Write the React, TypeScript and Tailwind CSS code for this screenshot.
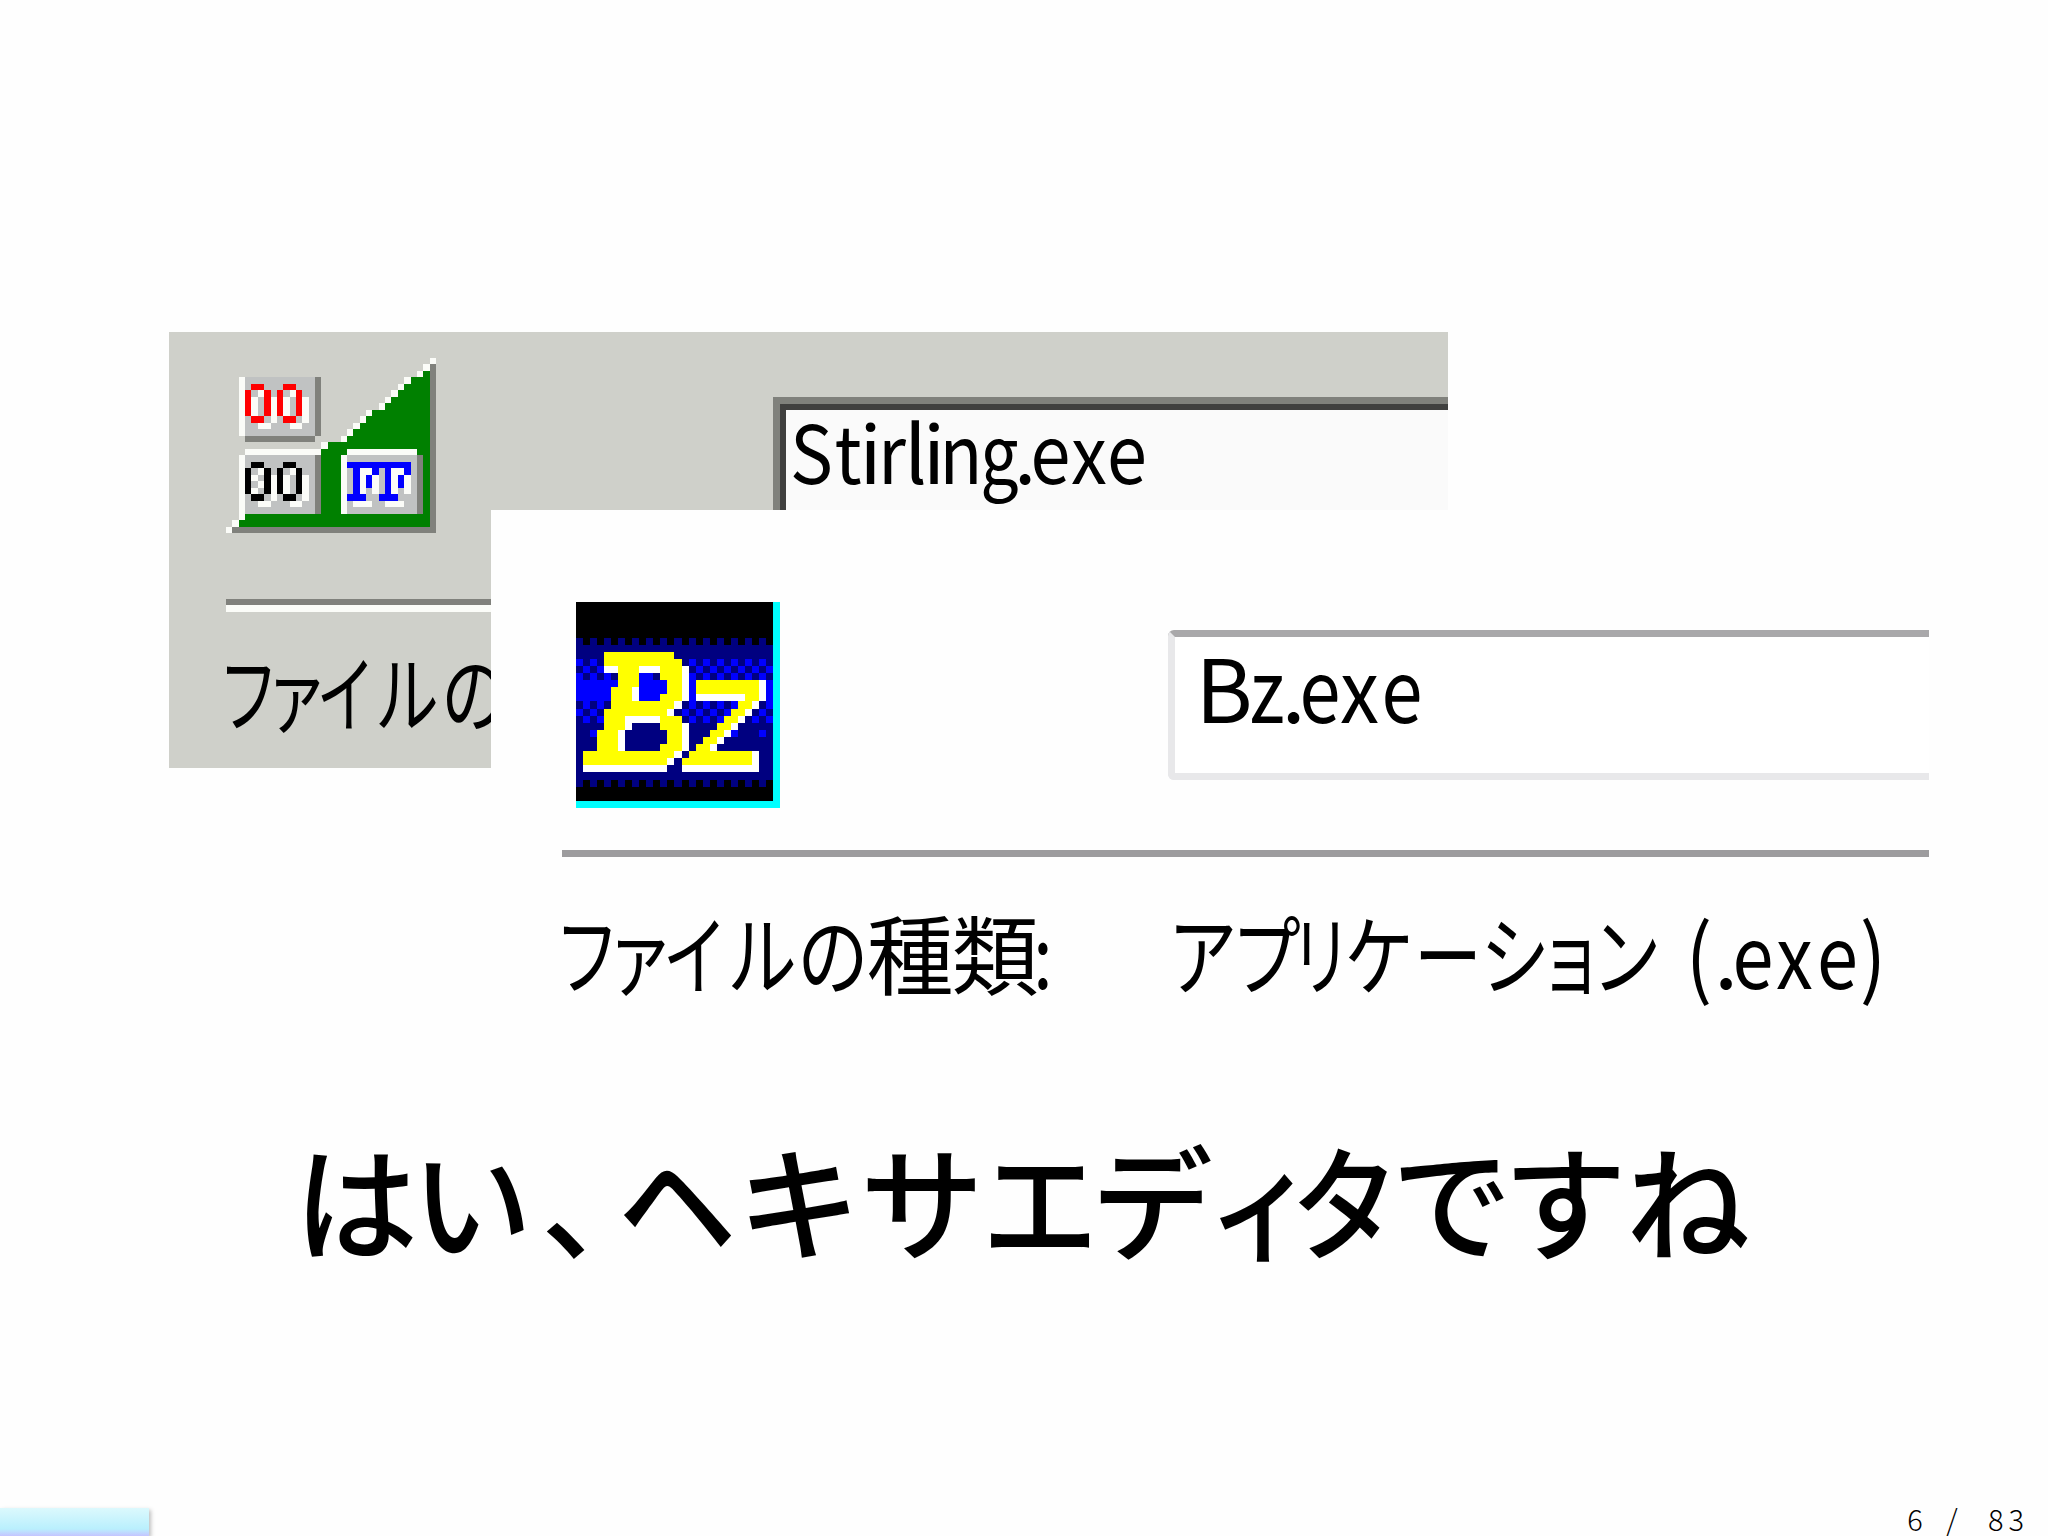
type Glyph = [char: string, width: number, scale?: number];
type Run = [x: number, y: number, w: number, h: number, fill: string];

const SLIDE_TITLE: Glyph[] = [
  ["は", 112], ["い", 120, 0.97], ["、", 80], ["ヘ", 130, 0.96], ["キ", 114], ["サ", 132], ["エ", 104, 0.94],
  ["デ", 120, 0.98], ["ィ", 98, 0.86], ["タ", 70, 0.88], ["で", 144, 0.97], ["す", 82], ["ね", 164],
];

const STIRLING_NAME: Glyph[] = [
  ["S", 45, 0.9], ["t", 28, 0.9], ["i", 17], ["r", 26, 0.9], ["l", 21], ["i", 16],
  ["n", 38, 0.88], ["g", 39, 0.85], [".", 12], ["e", 39, 0.9], ["x", 38, 0.9], ["e", 38, 0.9],
];

const STIRLING_TYPE: Glyph[] = [
  ["フ", 51, 0.72], ["ァ", 45, 0.75], ["イ", 54, 0.7], ["ル", 68, 0.76], ["の", 66, 0.78],
];

const BZ_NAME: Glyph[] = [["B", 50], ["z", 36, 0.85], [".", 17], ["e", 36, 0.85], ["x", 43, 0.9], ["e", 42, 0.85]];

const BZ_TYPE_LABEL: Glyph[] = [
  ["フ", 56, 0.75], ["ァ", 50, 0.78], ["イ", 60, 0.75], ["ル", 74, 0.8], ["の", 68, 0.82],
  ["種", 86], ["類", 84], [":", 12, 0.8],
];

const BZ_TYPE: Glyph[] = [
  ["ア", 63, 0.8], ["プ", 64, 0.8], ["リ", 46, 0.7], ["ケ", 70, 0.8], ["ー", 68, 0.78], ["シ", 66, 0.8],
  ["ョ", 46, 0.75], ["ン", 65, 0.8], [" ", 20], ["(", 40, 0.9], [".", 14], ["e", 40, 0.85], ["x", 43, 0.85],
  ["e", 43, 0.85], [")", 28, 0.9],
];

const W = "#fbfcf8";
const G = "#008000";
const L = "#c0c2c2";
const D = "#80817c";

// left edge of the white slope, top row first
const SLOPE = [32, 31, 30, 28, 27, 26, 25, 24, 22, 21, 20, 19, 18, 15];

function zero(x: number, y: number, fill: string): Run[] {
  return [
    [x + 2, y + 1, 1, 1, W], [x + 1, y + 2, 1, 3, W], [x + 4, y + 2, 1, 4, W], [x + 2, y + 6, 2, 1, W],
    [x + 1, y, 2, 1, fill], [x, y + 1, 1, 4, fill], [x + 3, y + 1, 1, 4, fill], [x + 1, y + 5, 2, 1, fill],
  ];
}

function letterF(x: number, y: number): Run[] {
  return [
    [x + 2, y + 1, 2, 1, W], [x + 2, y + 2, 1, 3, W], [x + 4, y + 2, 1, 2, W], [x + 4, y + 4, 1, 1, W], [x + 1, y + 6, 3, 1, W],
    [x, y, 5, 1, "#0000ff"], [x + 1, y + 1, 1, 4, "#0000ff"], [x + 4, y + 1, 1, 1, "#0000ff"],
    [x + 3, y + 2, 1, 2, "#0000ff"], [x, y + 5, 3, 1, "#0000ff"],
  ];
}

const STIRLING_ICON: Run[] = [
  ...SLOPE.flatMap((x, y): Run[] => [[x, y, 1, 1, W], [x + 1, y, Math.max(31 - x, 0), 1, G]]),
  [15, 14, 17, 10, G], [3, 24, 29, 1, G], [2, 25, 30, 1, G],
  [32, 1, 1, 26, D], [1, 26, 32, 1, D],
  [0, 26, 1, 1, W], [1, 25, 1, 1, W], [2, 24, 1, 1, W],
  [2, 3, 1, 9, W], [3, 3, 11, 9, L], [14, 3, 1, 9, D], [3, 12, 11, 1, D],
  [3, 14, 12, 1, W], [2, 15, 1, 9, W], [3, 15, 11, 9, L], [14, 15, 1, 9, D],
  [19, 14, 11, 1, W], [18, 15, 1, 9, W], [19, 15, 11, 9, L], [30, 15, 1, 9, D],
  ...zero(3, 4, "#ff0000"), ...zero(8, 4, "#ff0000"),
  ...zero(3, 16, "#000"), ...zero(8, 16, "#000"), [4, 19, 1, 1, L], [5, 19, 1, 1, W],
  ...letterF(19, 16), ...letterF(24, 16),
];

// k black, n navy, b blue, y yellow, w white, c cyan
const BZ_ICON = [
  "kkkkkkkkkkkkkkkkkkkkkkkkkkkkc",
  "kkkkkkkkkkkkkkkkkkkkkkkkkkkkc",
  "kkkkkkkkkkkkkkkkkkkkkkkkkkkkc",
  "kkkkkkkkkkkkkkkkkkkkkkkkkkkkc",
  "kkkkkkkkkkkkkkkkkkkkkkkkkkkkc",
  "nknknknknknknknknknknknknknkc",
  "nnnnnnnnnnnnnnnnnnnnnnnnnnnnc",
  "nnnnyyyyyyyyyynnnnnnnnnnnnnnc",
  "bnbnyyyyyyyyyyynbnbnbnbnbnbnc",
  "nbnbwwyyywwwyyywnbnbnbnbnbnbc",
  "bnbnbnyyybbnyyywbnbnbnbnbnbnc",
  "bbbbbbyyybbbbyywbyyyyyyyyywbc",
  "bbbbbyyywbbbbyywbyyyyyyyyywbc",
  "bbbbbyyywbbbyyywbwwwwwwwyywbc",
  "nbnbnyyyyyyyyywnbnbnbnbyywnbc",
  "bnbnyyyyyyyyywnbnbnbnbyywnbnc",
  "nbnbyyywwwwwyyynbnbnbyywnbnbc",
  "nnnnyyywnnnnyyywnnnnyywnnnnnc",
  "nnbyyywnnnnnnyywnnnyywbnnnbnc",
  "nnnyyywnnnnnnyywnnyywnnnnnnnc",
  "nnnyyywnnnnnyyywnyywnnnnnnnnc",
  "nyyyyyyyyyyyyywnyyyyyyyyywnnc",
  "nyyyyyyyyyyyywnyyyyyyyyyywnnc",
  "nwwwwwwwwwwwwnnwwwwwwwwwwwnnc",
  "nnnnnnnnnnnnnnnnnnnnnnnnnnnnc",
  "nknknknknknknknknknknknknknkc",
  "kkkkkkkkkkkkkkkkkkkkkkkkkkkkc",
  "kkkkkkkkkkkkkkkkkkkkkkkkkkkkc",
  "ccccccccccccccccccccccccccccc",
];

const BZ_COLORS: Record<string, string> = {
  k: "#000000", n: "#000080", b: "#0000ff", y: "#ffff00", w: "#ffffff", c: "#00ffff",
};

function Line({ glyphs, className }: { glyphs: Glyph[]; className: string }) {
  return (
    <p className={`flex whitespace-pre ${className}`}>
      {glyphs.map(([char, width, scale = 1], i) => (
        <span
          key={i}
          className="flex shrink-0 justify-center"
          style={{ width, transform: scale === 1 ? undefined : `scaleX(${scale})` }}>
          {char}
        </span>
      ))}
    </p>
  );
}

function StirlingIcon() {
  return (
    <svg className="block h-[175px] w-[210px]" viewBox="0 0 33 27" preserveAspectRatio="none" shapeRendering="crispEdges">
      {STIRLING_ICON.map(([x, y, w, h, fill], i) => (
        <rect key={i} x={x} y={y} width={w} height={h} fill={fill} />
      ))}
    </svg>
  );
}

function BzIcon() {
  return (
    <svg className="block h-[206px] w-[204px]" viewBox="0 0 29 29" preserveAspectRatio="none" shapeRendering="crispEdges">
      {BZ_ICON.flatMap((row, y) =>
        [...row].map((c, x) => <rect key={`${x}-${y}`} x={x} y={y} width={1} height={1} fill={BZ_COLORS[c]} />)
      )}
    </svg>
  );
}

function StirlingWindow() {
  return (
    <section className="h-[436px] w-[1279px] overflow-hidden bg-[#cfd0ca]">
      <div className="flex h-[267px] justify-between pl-[57px]">
        <div className="pt-[26px]">
          <StirlingIcon />
        </div>
        <div className="mt-[65px] h-[113px] w-[675px] border-t-[7px] border-l-[7px] border-[#80817c]">
          <div className="h-full border-t-[6px] border-l-[6px] border-[#40403f] bg-[#fafafa]">
            <Line glyphs={STIRLING_NAME} className="pl-[3px] text-[80px] leading-[78px]" />
          </div>
        </div>
      </div>
      <div className="ml-[57px] h-[13px] border-t-[6px] border-[#80817c] bg-[#fbfcf8]" />
      <Line glyphs={STIRLING_TYPE} className="mt-[34px] ml-[54px] text-[84px] leading-[88px]" />
    </section>
  );
}

function BzWindow() {
  return (
    <section className="h-[520px] w-[1438px] bg-[#fefefe] pt-[92px] pl-[71px]">
      <div className="flex h-[248px] justify-between pl-[14px]">
        <BzIcon />
        <div className="mt-7 h-[150px] w-[761px] rounded-l-[6px] border-t-[7px] border-b-[7px] border-l-[7px] border-t-[#a9a8aa] border-b-[#e8e8ea] border-l-[#e8e8ea] bg-white">
          <Line glyphs={BZ_NAME} className="pl-6 text-[87px] leading-[96px]" />
        </div>
      </div>
      <div className="h-[7px] bg-[#9d9c9e]" />
      <div className="flex pt-[44px] text-[87px] leading-[100px]">
        <Line glyphs={BZ_TYPE_LABEL} className="-ml-[3px] w-[612px]" />
        <Line glyphs={BZ_TYPE} className="" />
      </div>
    </section>
  );
}

export default function App() {
  return (
    <main className="relative flex h-[1536px] w-[2048px] flex-col justify-between overflow-hidden bg-[#fefefe] font-['Noto_Sans_CJK_JP',sans-serif] text-black">
      <div>
        <div className="relative h-[1107px]">
          <div className="absolute top-[332px] left-[169px]">
            <StirlingWindow />
          </div>
          <div className="absolute top-[510px] left-[491px]">
            <BzWindow />
          </div>
        </div>
        <h1>
          <Line
            glyphs={SLIDE_TITLE}
            className="pl-[300px] text-[124px] leading-[180px] font-medium [font-feature-settings:'halt']"
          />
        </h1>
      </div>
      <footer className="flex h-9 items-end justify-between">
        <div className="h-7 w-[149px] bg-linear-to-b from-[#dcf9fd] via-[#b9effd] via-75% to-[#c4c4ff] shadow-[2px_2px_4px_rgba(0,0,0,0.25)]" />
        <p className="pr-[19px] text-[29px] leading-9 font-light whitespace-pre">
          <span className="tracking-[5px]">6</span>
          <span className="tracking-[12px]"> / </span>
          <span className="tracking-[5px]">83</span>
        </p>
      </footer>
    </main>
  );
}
